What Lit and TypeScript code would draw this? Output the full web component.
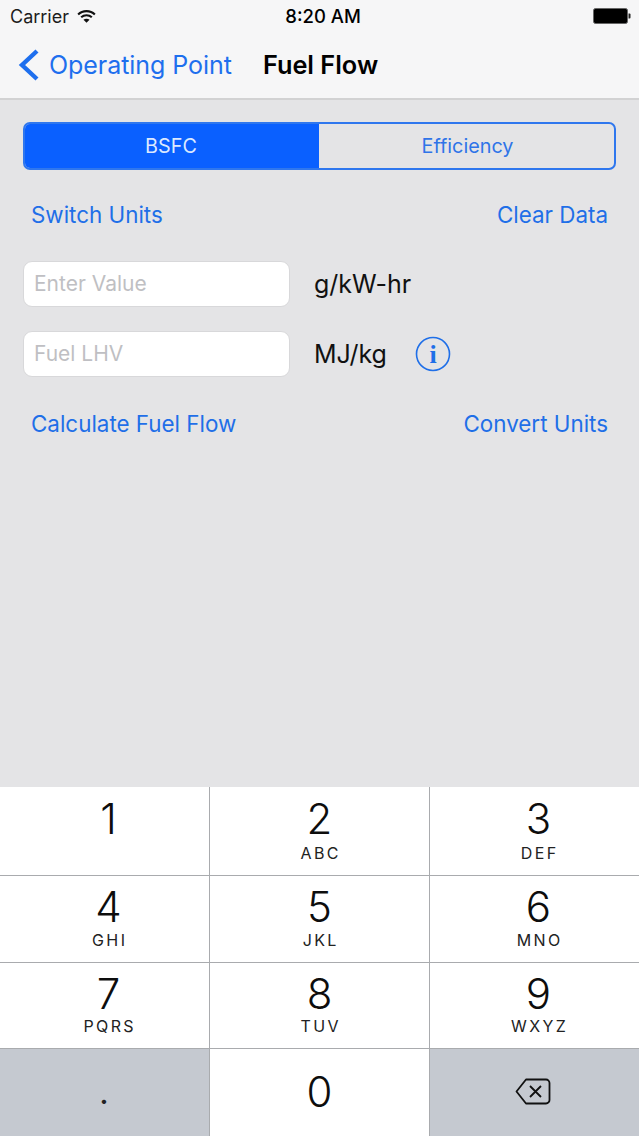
import { LitElement, css, html } from "lit";
import { customElement } from "lit/decorators.js";

const KEYS = [
  ["1", ""],
  ["2", "ABC"],
  ["3", "DEF"],
  ["4", "GHI"],
  ["5", "JKL"],
  ["6", "MNO"],
  ["7", "PQRS"],
  ["8", "TUV"],
  ["9", "WXYZ"],
];

@customElement("app-root")
export class AppRoot extends LitElement {
  static styles = css`
    :host {
      display: flex;
      flex-direction: column;
      width: 639px;
      height: 1136px;
      overflow: hidden;
      background: #e4e4e6;
      font-family: Inter, "Liberation Sans", sans-serif;
      color: #000;
    }

    .header {
      height: 98px;
      background: #f6f6f7;
      border-bottom: 2px solid #d2d2d3;
      flex: none;
    }

    .status {
      height: 32px;
      display: grid;
      grid-template-columns: 1fr auto 1fr;
      align-items: center;
      padding: 0 8px 0 10px;
      font-size: 18px;
    }

    .status-left {
      display: flex;
      align-items: center;
      gap: 8px;
      color: #1c1c1c;
    }

    .time {
      font-size: 18.5px;
      font-weight: 500;
      margin-left: 5px;
    }

    .battery {
      justify-self: end;
      display: block;
    }

    .nav {
      height: 66px;
      display: flex;
      align-items: center;
      padding-left: 18px;
    }

    .back {
      display: flex;
      align-items: center;
      gap: 9px;
      color: #1e6fee;
      font-size: 25px;
      letter-spacing: -0.05px;
    }

    .title {
      margin: 0 0 2px 31px;
      font-size: 25.3px;
      font-weight: 600;
    }

    .content {
      flex: 1;
      padding: 22px 23px 0;
    }

    .segment {
      display: grid;
      grid-template-columns: 294px 1fr;
      width: 593px;
      height: 48px;
      box-sizing: border-box;
      border: 2px solid #2f77ee;
      border-radius: 7px;
      overflow: hidden;
      font-size: 19.8px;
    }

    .segment div {
      display: flex;
      align-items: center;
      justify-content: center;
      padding-left: 2px;
      color: #2f74e8;
    }

    .segment .on {
      background: #0a60ff;
      color: #dce9ff;
      padding: 0 2px 0 0;
    }

    .links {
      display: flex;
      justify-content: space-between;
      padding: 0 8px;
      color: #1f6fe8;
      font-size: 22.4px;
      line-height: 30px;
    }

    .top-links {
      margin-top: 30px;
    }

    .bottom-links {
      margin-top: 32px;
    }

    .row {
      display: flex;
      align-items: center;
      height: 46px;
    }

    .row.first {
      margin-top: 31px;
    }

    .row.second {
      margin-top: 24px;
    }

    .field {
      width: 267px;
      height: 46px;
      box-sizing: border-box;
      display: flex;
      align-items: center;
      padding: 0 0 2px 10px;
      background: #fff;
      border: 1px solid #d8d8da;
      border-radius: 9px;
      color: #bfbfc3;
      font-size: 21px;
    }

    .unit {
      margin-left: 24px;
      font-size: 25px;
      color: #111;
    }

    .info {
      display: block;
      margin-left: 28px;
    }

    .info text {
      font-family: "Liberation Serif", serif;
      font-weight: 700;
      font-size: 26px;
      fill: #1f6fe8;
      text-anchor: middle;
    }

    .keyboard {
      flex: none;
      height: 349px;
      display: grid;
      grid-template-columns: 209px 219px 1fr;
      grid-template-rows: 88px 86px 85px 1fr;
      gap: 1px;
      background: #a9abae;
    }

    .key {
      background: #fff;
      display: flex;
      flex-direction: column;
      align-items: center;
      padding-top: 8px;
      box-sizing: border-box;
      min-width: 0;
    }

    .key:nth-child(3n + 1) {
      padding-left: 8px;
    }

    .key:nth-child(3n) {
      padding-left: 8px;
    }

    .key.r0 {
      padding-top: 9px;
    }

    .key.r0 .sub {
      margin-top: 2px;
    }

    .key.r1 .sub {
      margin-top: 1px;
    }

    .num {
      font-size: 42px;
      line-height: 46px;
      font-weight: 300;
      color: #0d0d0d;
    }

    .sub {
      font-size: 16px;
      line-height: 18px;
      letter-spacing: 2.4px;
      margin-right: -2.4px;
      color: #222;
    }

    .key.zero {
      padding-top: 20px;
    }

    .key.dark {
      background: #c5c9d0;
    }

    .key.dot {
      padding: 31px 0 0;
      font-size: 28px;
      line-height: 28px;
      font-weight: 600;
      color: #222;
    }

    .key.dot span {
      margin-left: -1px;
    }

    .key.del {
      padding: 29px 0 0;
    }

    .key.del svg {
      display: block;
      margin-right: 4px;
    }
  `;

  private renderKey(k: string[], i: number) {
    return html`<div class="key r${Math.floor(i / 3)}">
      <span class="num">${k[0]}</span>
      ${k[1] ? html`<span class="sub">${k[1]}</span>` : ""}
    </div>`;
  }

  render() {
    return html`
      <div class="header">
        <div class="status">
          <div class="status-left">
            <span>Carrier</span>
            <svg width="19" height="15" viewBox="0 0 20 15" fill="none" stroke="#111" stroke-width="2.2">
              <path d="M1.2 5.4 C6 0.6 14 0.6 18.8 5.4" />
              <path d="M4.4 8.4 C7.6 5.4 12.4 5.4 15.6 8.4" />
              <path d="M10 14 L6.8 10.9 C8.6 9.4 11.4 9.4 13.2 10.9 Z" fill="#111" stroke="none" />
            </svg>
          </div>
          <div class="time">8:20 AM</div>
          <svg class="battery" width="38" height="16" viewBox="0 0 38 16">
            <rect x="0.5" y="0.5" width="34" height="15" rx="2" fill="#000" stroke="#666" />
            <path d="M35.5 5.5h1a1 1 0 0 1 1 1v3a1 1 0 0 1-1 1h-1z" fill="#222" />
          </svg>
        </div>
        <div class="nav">
          <div class="back">
            <svg width="22" height="32" viewBox="0 0 22 32" fill="none" stroke="#1e6fee" stroke-width="4.4">
              <path d="M19 2 L4 16 L19 30" />
            </svg>
            <span>Operating Point</span>
          </div>
          <div class="title">Fuel Flow</div>
        </div>
      </div>

      <div class="content">
        <div class="segment">
          <div class="on">BSFC</div>
          <div>Efficiency</div>
        </div>

        <div class="links top-links">
          <span>Switch Units</span>
          <span>Clear Data</span>
        </div>

        <div class="row first">
          <div class="field">Enter Value</div>
          <span class="unit">g/kW-hr</span>
        </div>
        <div class="row second">
          <div class="field">Fuel LHV</div>
          <span class="unit">MJ/kg</span>
          <svg class="info" width="36" height="36" viewBox="0 0 36 36">
            <circle cx="18" cy="18" r="16.5" fill="none" stroke="#1f6fe8" stroke-width="1.6" />
            <text x="18" y="27">i</text>
          </svg>
        </div>

        <div class="links bottom-links">
          <span>Calculate Fuel Flow</span>
          <span>Convert Units</span>
        </div>
      </div>

      <div class="keyboard">
        ${KEYS.map((k, i) => this.renderKey(k, i))}
        <div class="key dark dot"><span>.</span></div>
        <div class="key zero"><span class="num">0</span></div>
        <div class="key dark del">
          <svg width="36" height="27" viewBox="0 0 36 27" fill="none" stroke="#111" stroke-width="1.8" stroke-linejoin="round">
            <path d="M11 1.5 H31 a3.5 3.5 0 0 1 3.5 3.5 V22 a3.5 3.5 0 0 1 -3.5 3.5 H11 L1.5 13.5 Z" />
            <path d="M15 8 L26 19 M26 8 L15 19" />
          </svg>
        </div>
      </div>
    `;
  }
}
